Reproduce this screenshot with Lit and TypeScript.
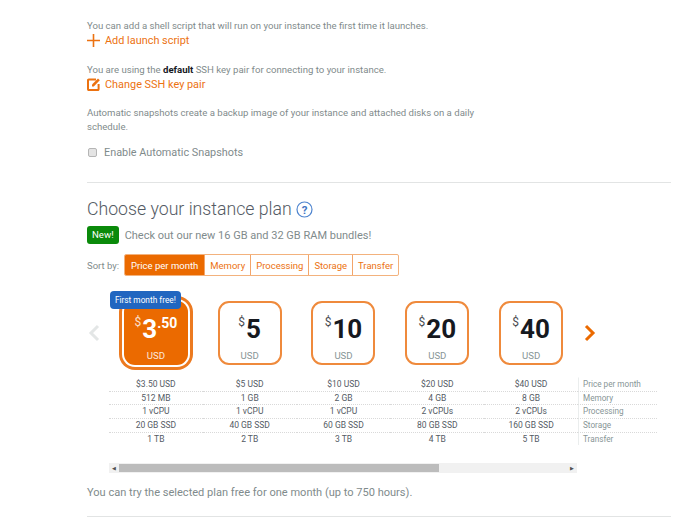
import {LitElement, html, css, svg} from 'lit';
import {customElement} from 'lit/decorators.js';

const plans = [
    {dollars: '3', cents: '.50', selected: true},
    {dollars: '5'},
    {dollars: '10'},
    {dollars: '20'},
    {dollars: '40'},
];

const specs = [
    {label: 'Price per month', values: ['$3.50 USD', '$5 USD', '$10 USD', '$20 USD', '$40 USD']},
    {label: 'Memory', values: ['512 MB', '1 GB', '2 GB', '4 GB', '8 GB']},
    {label: 'Processing', values: ['1 vCPU', '1 vCPU', '1 vCPU', '2 vCPUs', '2 vCPUs']},
    {label: 'Storage', values: ['20 GB SSD', '40 GB SSD', '60 GB SSD', '80 GB SSD', '160 GB SSD']},
    {label: 'Transfer', values: ['1 TB', '2 TB', '3 TB', '4 TB', '5 TB']},
];

const sorts = ['Price per month', 'Memory', 'Processing', 'Storage', 'Transfer'];

const chevron = (points: string, color: string) => svg`
    <svg width="13" height="18" viewBox="0 0 13 18">
        <polyline points=${points} fill="none" stroke=${color} stroke-width="3"/>
    </svg>`;

@customElement('app-root')
export class AppRoot extends LitElement {

    static override styles = css`
        :host {
            display: block;
            width: 700px;
            height: 529px;
            overflow: hidden;
            background: #fff;
            font-family: Roboto, sans-serif;
            color: #7f8b8c;
        }

        .page {
            width: 584px;
            margin-left: 87px;
            padding-top: 19px;
        }

        p {
            margin: 0;
        }

        .note {
            font-size: 9.6px;
            line-height: 14px;
            width: 390px;
        }

        .note b {
            color: #16191f;
        }

        .action {
            display: flex;
            align-items: center;
            gap: 5px;
            height: 14px;
            margin-bottom: 16px;
            font-size: 10.9px;
            color: #ec7211;
        }

        .action.edit {
            margin-bottom: 15px;
        }

        .check {
            display: flex;
            align-items: center;
            gap: 7px;
            margin-top: 11px;
            height: 14px;
            font-size: 10.85px;
        }

        .box {
            box-sizing: border-box;
            width: 9px;
            height: 9px;
            margin-left: 1px;
            border: 1px solid #b5b5b5;
            border-radius: 2px;
            background: #e4e4e4;
        }

        hr {
            margin: 0;
            border: 0;
            border-top: 1px solid #e2e4e4;
        }

        .first-rule {
            margin-top: 23px;
        }

        .title {
            display: flex;
            align-items: center;
            gap: 4px;
            height: 30px;
            margin-top: 11px;
            font-size: 17.7px;
            font-weight: 300;
            color: #545b64;
        }

        .new-row {
            display: flex;
            align-items: center;
            gap: 6px;
            margin-top: 2px;
            font-size: 11px;
        }

        .new {
            padding: 0 5px;
            height: 18px;
            line-height: 18px;
            font-size: 9.6px;
            color: #fff;
            background: #0a8a0a;
            border-radius: 3px;
        }

        .sort-row {
            display: flex;
            align-items: center;
            gap: 5px;
            margin-top: 10px;
            font-size: 9.5px;
        }

        .sorts {
            display: flex;
            height: 20px;
            border: 1px solid #f3b27d;
            border-radius: 2px;
            color: #ec7211;
        }

        .sorts span {
            display: flex;
            align-items: center;
            padding: 0 5px;
            border-left: 1px solid #f3a56a;
        }

        .sorts span:first-child {
            border-left: 0;
            padding: 0 6px;
            color: #fff;
            background: #eb6a00;
            border-radius: 1px 0 0 1px;
        }

        .plans {
            display: flex;
            align-items: center;
            height: 78px;
            margin-top: 18px;
        }

        .arrow {
            display: flex;
            justify-content: center;
            width: 14px;
            margin-right: 8px;
        }

        .arrow.next {
            margin: 0 0 0 5px;
        }

        .cell {
            display: flex;
            justify-content: center;
            width: 93.8px;
        }

        .card {
            position: relative;
            display: flex;
            flex-direction: column;
            align-items: center;
            box-sizing: border-box;
            width: 64px;
            height: 64px;
            border: 2px solid #ef8a3c;
            border-radius: 11px;
            color: #16191f;
        }

        .card.selected {
            border: 0;
            color: #fff;
            background: #eb6a00;
            box-shadow: 0 0 0 2px #fff, 0 0 0 5px #ec7a20;
        }

        .price {
            display: flex;
            align-items: flex-start;
            height: 34px;
            margin-top: 9px;
            font-size: 26px;
            line-height: 34px;
            font-weight: 700;
        }

        .selected .price {
            margin-top: 11px;
        }

        .price small {
            font-size: 12px;
            line-height: 20px;
            font-weight: 400;
            margin-right: 1px;
            opacity: .8;
        }

        .price .cents {
            font-size: 14px;
            line-height: 22px;
            font-weight: 700;
        }

        .usd {
            margin-top: 4px;
            font-size: 9.6px;
            line-height: 12px;
            color: #879596;
        }

        .selected .usd {
            color: #fff;
            opacity: .85;
        }

        .ribbon {
            position: absolute;
            top: -10px;
            left: -14px;
            height: 18px;
            padding: 0 5px;
            line-height: 18px;
            font-size: 8.3px;
            white-space: nowrap;
            color: #fff;
            background: #2166c0;
            border-radius: 4px;
        }

        .specs {
            display: grid;
            grid-template-columns: repeat(5, 93.8px) 79px;
            margin: 5px 0 0 22px;
            font-size: 8.5px;
        }

        .specs > div {
            height: 13.7px;
            box-sizing: border-box;
            line-height: 13px;
            text-align: center;
            color: #545b64;
            border-top: 1px dotted #d9d9d9;
        }

        .specs > div.top {
            border-top: 1px solid transparent;
        }

        .specs > div.label {
            padding-left: 4px;
            font-size: 8.2px;
            text-align: left;
            color: #879596;
            border-left: 1px solid #eaeded;
        }

        .scrollbar {
            display: flex;
            align-items: center;
            width: 468px;
            height: 10px;
            margin: 18px 0 0 22px;
            background: #f1f1f1;
        }

        .scrollbar i {
            width: 10px;
            text-align: center;
            font-size: 5px;
            font-style: normal;
            line-height: 10px;
            color: #505050;
        }

        .thumb {
            width: 320px;
            height: 8px;
            background: #bcbcbc;
        }

        .track {
            flex: 1;
        }

        .trial {
            margin-top: 13px;
            font-size: 11.05px;
            line-height: 14px;
        }

        .last-rule {
            margin-top: 16px;
        }
    `;

    override render() {
        return html`
        <div class="page">
            <p class="note">You can add a shell script that will run on your instance the first time it launches.</p>
            <div class="action">
                <svg width="13" height="13" viewBox="0 0 13 13">
                    <path d="M6.5 0v13M0 6.5h13" stroke="#ec7211" stroke-width="1.6" fill="none"/>
                </svg>
                Add launch script
            </div>
            <p class="note">You are using the <b>default</b> SSH key pair for connecting to your instance.</p>
            <div class="action edit">
                <svg width="13" height="13" viewBox="0 0 13 13">
                    <path d="M9 1.500H1.800a.8.8 0 0 0-.8.8v9a.8.8 0 0 0 .8.8h9a.8.8 0 0 0 .8-.8V6" stroke="#ec7211" stroke-width="2" fill="none"/>
                    <path d="M5 8.500V6.500L11 .5l1.800 1.800-6 6.200z" fill="#ec7211"/>
                </svg>
                Change SSH key pair
            </div>
            <p class="note">Automatic snapshots create a backup image of your instance and attached disks on a daily schedule.</p>
            <div class="check"><span class="box"></span>Enable Automatic Snapshots</div>
            <hr class="first-rule">
            <div class="title">
                Choose your instance plan
                <svg width="17" height="17" viewBox="0 0 17 17">
                    <circle cx="8.500" cy="8.500" r="7.500" fill="none" stroke="#4f85cf" stroke-width="1.200"/>
                    <text x="8.500" y="12.500" text-anchor="middle" font-size="11.500" font-weight="700" fill="#3f75c4">?</text>
                </svg>
            </div>
            <div class="new-row"><span class="new">New!</span>Check out our new 16 GB and 32 GB RAM bundles!</div>
            <div class="sort-row">
                Sort by:
                <div class="sorts">${sorts.map((s) => html`<span>${s}</span>`)}</div>
            </div>
            <div class="plans">
                <div class="arrow">${chevron('10,2 3,9 10,16', '#e3e6e6')}</div>
                ${plans.map((p) => html`
                <div class="cell">
                    <div class="card ${p.selected ? 'selected' : ''}">
                        ${p.selected ? html`<span class="ribbon">First month free!</span>` : ''}
                        <div class="price"><small>$</small>${p.dollars}${p.cents ? html`<span class="cents">${p.cents}</span>` : ''}</div>
                        <div class="usd">USD</div>
                    </div>
                </div>`)}
                <div class="arrow next">${chevron('3,2 10,9 3,16', '#eb6a00')}</div>
            </div>
            <div class="specs">
                ${specs.map((row, i) => html`
                    ${row.values.map((v) => html`<div class=${i === 0 ? 'top' : ''}>${v}</div>`)}
                    <div class="label ${i === 0 ? 'top' : ''}">${row.label}</div>
                `)}
            </div>
            <div class="scrollbar">
                <i>◀</i><div class="thumb"></div><div class="track"></div><i>▶</i>
            </div>
            <p class="trial">You can try the selected plan free for one month (up to 750 hours).</p>
            <hr class="last-rule">
        </div>
        `;
    }
}
